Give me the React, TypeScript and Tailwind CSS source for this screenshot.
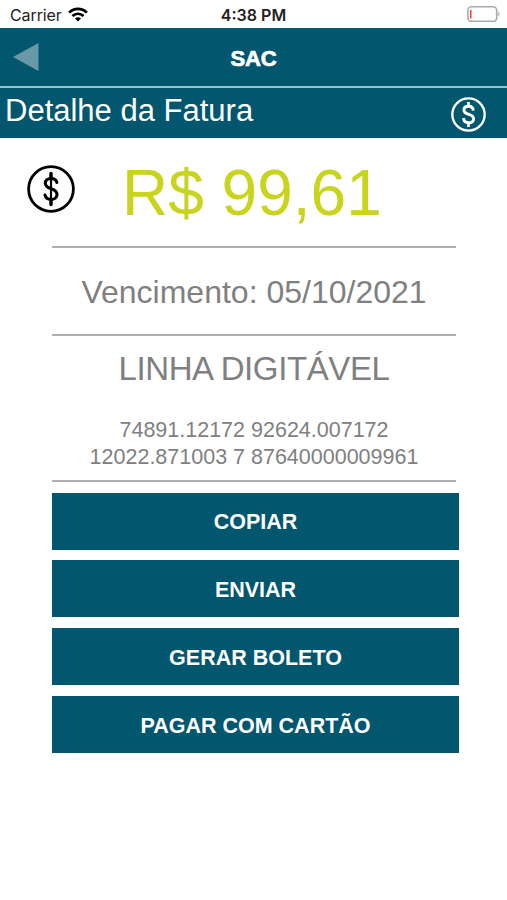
import { useState } from 'react';

interface Fatura {
  valor: string;
  vencimento: string;
  linhaDigitavel: string[];
}

const fatura: Fatura = {
  valor: 'R$ 99,61',
  vencimento: '05/10/2021',
  linhaDigitavel: ['74891.12172 92624.007172', '12022.871003 7 87640000009961'],
};

const acoes = ['COPIAR', 'ENVIAR', 'GERAR BOLETO', 'PAGAR COM CARTÃO'];

function IconeWifi() {
  return (
    <svg className="ml-[6px] mt-[7px] h-[15px] w-5" viewBox="0 0 20 15" fill="none" stroke="#000" strokeWidth="2.7">
      <path d="M1.1 5.6C6.2.6 13.8.6 18.9 5.6" />
      <path d="M4.4 9.1c3.3-3.1 7.9-3.1 11.2 0" />
      <path d="M10 14.4l-3-3c1.7-1.5 4.3-1.5 6 0z" fill="#000" stroke="none" />
    </svg>
  );
}

function IconeBateria() {
  return (
    <svg className="mt-[6px] h-4 w-[33px]" viewBox="0 0 33 16" fill="none">
      <rect x=".9" y=".8" width="28.8" height="14.6" rx="3.6" stroke="#aaa" strokeWidth="1.6" />
      <rect x="3" y="3.8" width="1.5" height="8.6" rx=".5" fill="#ff3b30" />
      <path d="M31.2 5.7c1.7.6 1.7 4.1 0 4.7z" fill="#aaa" />
    </svg>
  );
}

function IconeCifrao({ className }: { className: string }) {
  return (
    <svg className={className} viewBox="0 0 48 48" fill="none" stroke="currentColor" strokeLinecap="round">
      <circle cx="24" cy="24" r="22.4" strokeWidth="2.8" />
      <path d="M24 8.5v4M24 36v3.5" strokeWidth="3.4" />
      <path d="M24 8.5v31" strokeWidth="2.2" />
      <path
        d="M29.9 17.4c-.7-2.600-2.900-3.900-5.900-3.900-3.300 0-5.700 1.800-5.700 4.700 0 3.200 2.700 4.400 5.900 5.500 3.300 1.100 5.800 2.400 5.800 5.700 0 3.200-2.600 5.100-5.900 5.100-3.300 0-5.600-1.600-6.100-4.400"
        strokeWidth="3.1"
      />
    </svg>
  );
}

function IconeCifraoBarra() {
  return (
    <svg className="mt-[9px] h-[35px] w-[35px]" viewBox="0 0 48 48" fill="none" stroke="currentColor">
      <circle cx="24" cy="24" r="22.2" strokeWidth="3.2" />
      <path d="M24 7v6M24 35v6" strokeWidth="3.8" />
      <path
        d="M30.6 18.6c-.2-3.700-2.800-5.900-6.500-5.900-3.700 0-6.400 2-6.400 5.200 0 3.700 3.100 4.800 6.600 5.800 3.800 1.100 6.700 2.400 6.700 6.100 0 3.500-2.900 5.500-6.800 5.500-4.100 0-6.700-2.200-7-6.200"
        strokeWidth="4"
      />
    </svg>
  );
}

export default function App() {
  const [acaoAtiva, setAcaoAtiva] = useState<string | null>(null);

  return (
    <div className="flex h-[900px] w-[507px] flex-col overflow-hidden bg-white font-['Liberation_Sans',Arial,sans-serif]">
      <div className="flex h-7 justify-between pr-[7px] pl-[10px] font-['Inter',sans-serif] text-[16px] leading-[30px] text-[#222]">
        <div className="flex flex-1">
          <span className="tracking-[-0.1px]">Carrier</span>
          <IconeWifi />
        </div>
        <span className="pr-[3px] font-semibold whitespace-nowrap">4:38 PM</span>
        <div className="flex flex-1 justify-end">
          <IconeBateria />
        </div>
      </div>

      <header className="flex h-[58px] shrink-0 items-center bg-[#02566e] text-white">
        <button className="w-[60px] pl-[13px]" aria-label="Voltar">
          <svg className="h-7 w-[26px]" viewBox="0 0 26 28">
            <path d="M0 14L25.5 0v28z" fill="#6799a8" />
          </svg>
        </button>
        <h1 className="flex-1 pt-[3px] text-center text-[22px] font-bold tracking-[-0.2px] [-webkit-text-stroke:0.7px_white]">SAC</h1>
        <div className="w-[60px]" />
      </header>

      <div className="flex h-[52px] shrink-0 justify-between border-t-2 border-[#a3bfc8] bg-[#02566e] pr-[21px] pl-[5px] text-white">
        <h2 className="text-[31px] leading-[46px]">Detalhe da Fatura</h2>
        <IconeCifraoBarra />
      </div>

      <div className="flex h-[108px] shrink-0 pl-[27px]">
        <IconeCifrao className="mt-[27px] h-12 w-12 text-black" />
        <p className="ml-[47px] text-[64px] leading-[110px] whitespace-nowrap text-[#c8d51c]">{fatura.valor}</p>
      </div>

      <main className="ml-[52px] w-[407px] text-center text-[#808080]">
        <section className="mr-[3px] border-y-2 border-[#b0b0b0]">
          <p className="h-[86px] text-[32px] leading-[89px] whitespace-nowrap">Vencimento: {fatura.vencimento}</p>
        </section>
        <section className="mr-[3px] h-[146px] border-b-2 border-[#b0b0b0]">
          <h3 className="pt-[11px] text-[33px] leading-[44px] tracking-[-0.4px] whitespace-nowrap">LINHA DIGITÁVEL</h3>
          <div className="pt-[26px] text-[21.5px] leading-[27px]">
            {fatura.linhaDigitavel.map((linha) => (
              <p key={linha}>{linha}</p>
            ))}
          </div>
        </section>

        <div className="mt-[11px] flex flex-col gap-[11px]">
          {acoes.map((acao) => (
            <button
              key={acao}
              onClick={() => setAcaoAtiva(acao)}
              aria-pressed={acaoAtiva === acao}
              className="h-[57px] bg-[#02566e] pt-[4px] text-[21.5px] font-bold text-white first:-mb-px first:pt-[2px]"
            >
              {acao}
            </button>
          ))}
        </div>
      </main>
    </div>
  );
}
